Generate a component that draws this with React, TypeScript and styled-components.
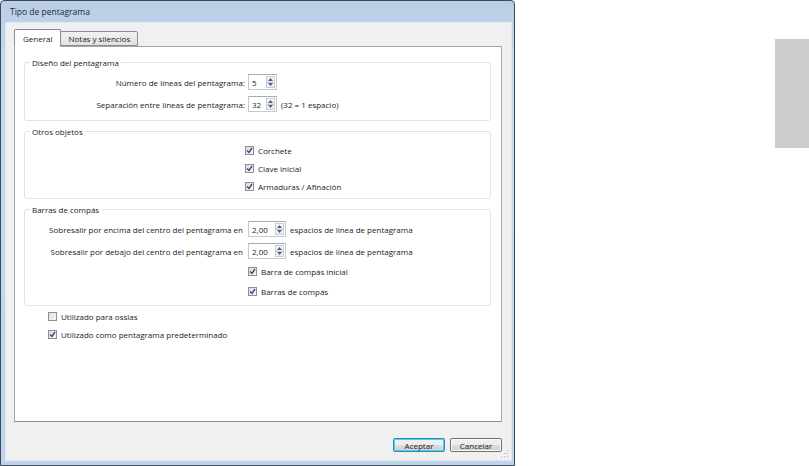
import React from "react";
import styled, { createGlobalStyle } from "styled-components";

const GlobalStyle = createGlobalStyle`
  html, body {
    margin: 0;
    padding: 0;
    background: #ffffff;
  }
  body {
    width: 809px;
    height: 466px;
    overflow: hidden;
    font-family: "Open Sans", "Liberation Sans", sans-serif;
    color: #222222;
  }
`;

const Page = styled.div`
  display: flex;
  width: 809px;
  height: 466px;
`;

const Window = styled.div`
  box-sizing: border-box;
  width: 515px;
  height: 466px;
  flex: 0 0 auto;
  border: 1px solid #3d4a5a;
  border-radius: 4px 4px 0 0;
  background: linear-gradient(to bottom, #b9cde6 0px, #c6d8ee 60px, #c0d4eb 100%);
  display: flex;
  flex-direction: column;
  padding: 0 2px 4px 4px;
`;

const TitleBar = styled.div`
  height: 21px;
  flex: 0 0 auto;
  display: flex;
  align-items: center;
  padding-left: 5px;
  font-size: 8.5px;
  color: #1e2a38;
`;

const Client = styled.div`
  position: relative;
  flex: 1;
  border: 1px solid #dfe8f3;
  background: #f0f0f0;
  display: flex;
  flex-direction: column;
  padding: 6px 9px 8px 8px;
  font-size: 8px;
`;

const TabStrip = styled.div`
  display: flex;
  align-items: flex-end;
  height: 18px;
  position: relative;
  z-index: 1;
  margin-bottom: -1px;
`;

const Tab = styled.div<{ $active?: boolean }>`
  box-sizing: border-box;
  display: flex;
  align-items: center;
  justify-content: center;
  border: 1px solid #898c95;
  border-bottom: ${(p) => (p.$active ? "1px solid #ffffff" : "1px solid #898c95")};
  border-radius: 2px 2px 0 0;
  background: ${(p) =>
    p.$active ? "#ffffff" : "linear-gradient(to bottom, #f2f2f2, #e1e1e1)"};
  height: ${(p) => (p.$active ? "18px" : "15px")};
  padding: 0 ${(p) => (p.$active ? "8px" : "7px")};
  margin-left: ${(p) => (p.$active ? "0" : "-1px")};
  margin-bottom: ${(p) => (p.$active ? "0" : "1px")};
  font-size: 8px;
`;

const Panel = styled.div`
  box-sizing: border-box;
  height: 376px;
  border: 1px solid #a3a5ab;
  border-bottom-color: #8b8d93;
  background: #ffffff;
  padding: 15px 10px 0 9px;
  display: flex;
  flex-direction: column;
`;

const Group = styled.div<{ $top?: number; $bottom?: number; $gap?: number }>`
  position: relative;
  border: 1px solid #dde3e8;
  border-radius: 3px;
  padding: ${(p) => p.$top ?? 11}px 0 ${(p) => p.$bottom ?? 8}px 0;
  display: flex;
  flex-direction: column;
  gap: ${(p) => p.$gap ?? 6}px;
  & + & {
    margin-top: 10px;
  }
`;

const Legend = styled.span`
  position: absolute;
  top: -6px;
  left: 5px;
  padding: 0 2px;
  background: #ffffff;
  line-height: 11px;
`;

const FieldRow = styled.div`
  display: flex;
  align-items: center;
  height: 16px;
`;

const RowLabel = styled.span<{ $width: number; $pad: number }>`
  width: ${(p) => p.$width}px;
  flex: 0 0 auto;
  padding-right: ${(p) => p.$pad}px;
  text-align: right;
  white-space: nowrap;
`;

const Spin = styled.div<{ $width: number }>`
  box-sizing: border-box;
  width: ${(p) => p.$width}px;
  height: 16px;
  flex: 0 0 auto;
  border: 1px solid #c5cad1;
  border-top-color: #a6abb3;
  background: #ffffff;
  display: flex;
  align-items: stretch;
  padding: 1px;
`;

const SpinValue = styled.span`
  flex: 1;
  display: flex;
  align-items: center;
  padding-left: 2px;
`;

const SpinButtons = styled.div`
  width: 9px;
  display: flex;
  flex-direction: column;
`;

const SpinButton = styled.div`
  flex: 1;
  box-sizing: border-box;
  border: 1px solid #c9ced6;
  background: linear-gradient(to bottom, #f7f8fa, #e6e9ee);
  display: flex;
  align-items: center;
  justify-content: center;
  & + & {
    margin-top: -1px;
  }
`;

const Note = styled.span`
  margin-left: 4px;
  white-space: nowrap;
`;

const CheckRow = styled.label<{ $indent: number; $space?: number }>`
  display: flex;
  align-items: center;
  gap: 4px;
  height: 12px;
  padding-left: ${(p) => p.$indent}px;
  margin-top: ${(p) => p.$space ?? 0}px;
  white-space: nowrap;
`;

const Box = styled.span`
  box-sizing: border-box;
  width: 9px;
  height: 9px;
  border: 1px solid #8e8f8f;
  background: linear-gradient(135deg, #dcdcdc, #f7f7f7);
  display: flex;
  align-items: center;
  justify-content: center;
  flex: 0 0 auto;
`;

const LooseChecks = styled.div`
  display: flex;
  flex-direction: column;
  gap: 6px;
  margin-top: 4px;
`;

const ButtonRow = styled.div`
  margin-top: auto;
  display: flex;
  justify-content: flex-end;
  gap: 5px;
`;

const Button = styled.button<{ $default?: boolean }>`
  box-sizing: border-box;
  width: 52px;
  height: 14px;
  padding: 0;
  font-family: inherit;
  font-size: 8px;
  color: #1b1b1b;
  border: 1px solid ${(p) => (p.$default ? "#3c7fb1" : "#707070")};
  border-radius: 2px;
  background: linear-gradient(to bottom, #f2f2f2 0%, #ebebeb 50%, #dddddd 51%, #cfcfcf 100%);
  box-shadow: inset 0 0 0 1px ${(p) => (p.$default ? "#48d6f8" : "#fbfbfb")};
`;

const Grip = styled.svg`
  position: absolute;
  right: 2px;
  bottom: 2px;
`;

const RightArea = styled.div`
  flex: 1;
  display: flex;
  justify-content: flex-end;
  align-items: flex-start;
  padding-top: 39px;
`;

const GrayBlock = styled.div`
  width: 34px;
  height: 109px;
  background: #cccccc;
`;

const Arrow: React.FC<{ up?: boolean }> = ({ up }) => (
  <svg width="5" height="3" viewBox="0 0 5 3">
    <path d={up ? "M2.5 0 L5 3 L0 3 Z" : "M0 0 L5 0 L2.5 3 Z"} fill="#4d6185" />
  </svg>
);

const SpinBox: React.FC<{ value: string; width: number }> = ({ value, width }) => (
  <Spin $width={width}>
    <SpinValue>{value}</SpinValue>
    <SpinButtons>
      <SpinButton>
        <Arrow up />
      </SpinButton>
      <SpinButton>
        <Arrow />
      </SpinButton>
    </SpinButtons>
  </Spin>
);

const Check: React.FC<{ checked?: boolean; label: string; indent: number; space?: number }> = ({
  checked,
  label,
  indent,
  space,
}) => (
  <CheckRow $indent={indent} $space={space}>
    <Box>
      {checked && (
        <svg width="7" height="7" viewBox="0 0 7 7">
          <path d="M1 3.5 L3 5.5 L6 1" stroke="#354a8c" strokeWidth="1.4" fill="none" />
        </svg>
      )}
    </Box>
    {label}
  </CheckRow>
);

export default function App() {
  return (
    <>
      <GlobalStyle />
      <Page>
        <Window>
          <TitleBar>Tipo de pentagrama</TitleBar>
          <Client>
            <TabStrip>
              <Tab $active>General</Tab>
              <Tab>Notas y silencios</Tab>
            </TabStrip>
            <Panel>
              <Group $top={11} $bottom={8} $gap={6}>
                <Legend>Diseño del pentagrama</Legend>
                <FieldRow>
                  <RowLabel $width={220} $pad={3}>Número de líneas del pentagrama:</RowLabel>
                  <SpinBox value="5" width={29} />
                </FieldRow>
                <FieldRow>
                  <RowLabel $width={220} $pad={3}>Separación entre líneas de pentagrama:</RowLabel>
                  <SpinBox value="32" width={29} />
                  <Note>(32 = 1 espacio)</Note>
                </FieldRow>
              </Group>
              <Group $top={12} $bottom={6} $gap={6}>
                <Legend>Otros objetos</Legend>
                <Check checked label="Corchete" indent={220} />
                <Check checked label="Clave inicial" indent={220} />
                <Check checked label="Armaduras / Afinación" indent={220} />
              </Group>
              <Group $top={11} $bottom={8} $gap={6}>
                <Legend>Barras de compás</Legend>
                <FieldRow>
                  <RowLabel $width={218} $pad={5}>Sobresalir por encima del centro del pentagrama en</RowLabel>
                  <SpinBox value="2,00" width={38} />
                  <Note>espacios de línea de pentagrama</Note>
                </FieldRow>
                <FieldRow>
                  <RowLabel $width={218} $pad={5}>Sobresalir por debajo del centro del pentagrama en</RowLabel>
                  <SpinBox value="2,00" width={38} />
                  <Note>espacios de línea de pentagrama</Note>
                </FieldRow>
                <Check checked label="Barra de compás inicial" indent={223} />
                <Check checked label="Barras de compás" indent={223} space={2} />
              </Group>
              <LooseChecks>
                <Check label="Utilizado para ossias" indent={24} />
                <Check checked label="Utilizado como pentagrama predeterminado" indent={24} />
              </LooseChecks>
            </Panel>
            <ButtonRow>
              <Button $default>Aceptar</Button>
              <Button>Cancelar</Button>
            </ButtonRow>
            <Grip width="8" height="8" viewBox="0 0 8 8">
              <rect x="6" y="0" width="1" height="1" fill="#b5b5b5" />
              <rect x="3" y="3" width="1" height="1" fill="#b5b5b5" />
              <rect x="6" y="3" width="1" height="1" fill="#b5b5b5" />
              <rect x="0" y="6" width="1" height="1" fill="#b5b5b5" />
              <rect x="3" y="6" width="1" height="1" fill="#b5b5b5" />
              <rect x="6" y="6" width="1" height="1" fill="#b5b5b5" />
            </Grip>
          </Client>
        </Window>
        <RightArea>
          <GrayBlock />
        </RightArea>
      </Page>
    </>
  );
}
